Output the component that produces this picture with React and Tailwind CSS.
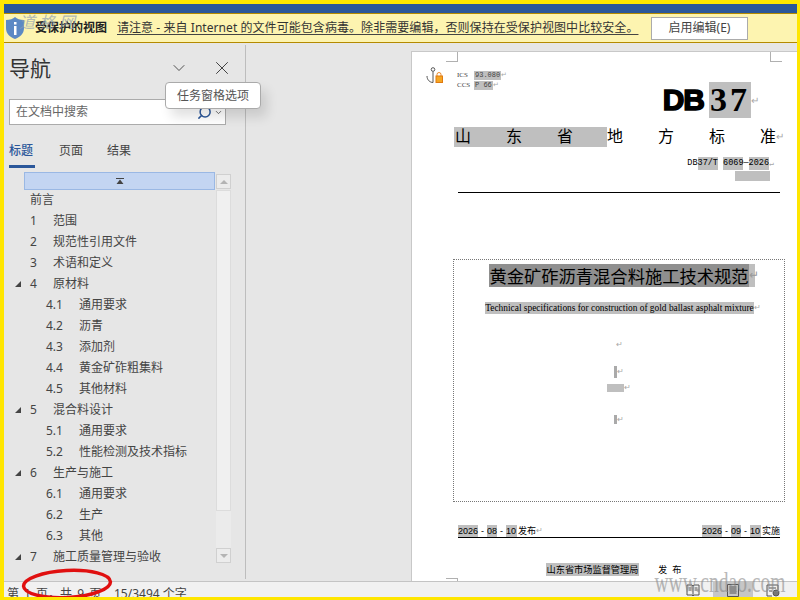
import React from "react";
import { ChevronDown, X, Search } from "lucide-react";

const CJK = "font-['Noto_Sans','Noto_Sans_CJK_SC',sans-serif]";

const TREE = [
  { text: "前言", plain: true },
  { num: "1", text: "范围" },
  { num: "2", text: "规范性引用文件" },
  { num: "3", text: "术语和定义" },
  { num: "4", text: "原材料", open: true },
  { num: "4.1", text: "通用要求", sub: true },
  { num: "4.2", text: "沥青", sub: true },
  { num: "4.3", text: "添加剂", sub: true },
  { num: "4.4", text: "黄金矿砟粗集料", sub: true },
  { num: "4.5", text: "其他材料", sub: true },
  { num: "5", text: "混合料设计", open: true },
  { num: "5.1", text: "通用要求", sub: true },
  { num: "5.2", text: "性能检测及技术指标", sub: true },
  { num: "6", text: "生产与施工", open: true },
  { num: "6.1", text: "通用要求", sub: true },
  { num: "6.2", text: "生产", sub: true },
  { num: "6.3", text: "其他", sub: true },
  { num: "7", text: "施工质量管理与验收", open: true },
];

function Ret({ className = "" }) {
  return <span className={`text-[#a8a8a8] ${className}`}>↵</span>;
}

function TreeRow({ row }) {
  if (row.plain) {
    return <div className="h-[21px] flex items-center pl-[26px]">{row.text}</div>;
  }
  return (
    <div className="h-[21px] flex items-center">
      <div className="w-[26px] shrink-0 pl-[10px]">
        {row.open && (
          <svg width="8" height="8" viewBox="0 0 8 8">
            <path d="M7 1v6H1z" fill="#444" />
          </svg>
        )}
      </div>
      {row.sub ? (
        <>
          <span className="w-[33px] shrink-0 pl-4 box-content">{row.num}</span>
          <span>{row.text}</span>
        </>
      ) : (
        <>
          <span className="w-[23px] shrink-0">{row.num}</span>
          <span>{row.text}</span>
        </>
      )}
    </div>
  );
}

function NavPane() {
  return (
    <div className="relative w-[241px] shrink-0 h-full">
      <div className="flex items-center h-[46px] pt-[4px] pl-[5px]">
        <span className="text-[21px] text-[#333] w-[160px] leading-none">导航</span>
        <ChevronDown size={20} strokeWidth={1} className="text-[#333]" />
        <X size={22} strokeWidth={1} className="text-[#333] ml-[22px]" />
      </div>
      <div className="ml-[5px] mt-[10px] w-[217px] h-[26px] bg-white border border-[#ababab] flex items-center pl-[6px] text-[12px] text-[#666]">
        <span className="flex-1">在文档中搜索</span>
        <Search size={15} strokeWidth={2.4} className="text-[#2b579a] -scale-x-100" />
        <ChevronDown size={9} strokeWidth={2} className="text-[#444] mx-[2px]" />
      </div>
      <div className="ml-[5px] mt-[17px] flex gap-[24px] text-[12px] text-[#444] h-[26px]">
        <span className="w-[26px] h-[26px] border-b-[3px] border-[#2b579a] text-[#2b579a] font-medium">标题</span>
        <span>页面</span>
        <span>结果</span>
      </div>
      <div className="flex mt-[4px]">
        <div className="w-[212px] overflow-hidden text-[12px] text-[#444]">
          <div className="ml-[20px] w-[191px] h-[18px] -mb-[1px] bg-[#c3d5f2] border border-[#9ab8e4] flex items-center justify-center">
            <svg width="10" height="8" viewBox="0 0 10 8">
              <path d="M1 1h8v1H1zM5 2.5 8.5 7h-7z" fill="#444" />
            </svg>
          </div>
          {TREE.map((row) => (
            <TreeRow key={row.num || row.text} row={row} />
          ))}
        </div>
        <div className="w-[15px] mt-[2px] h-[389px] flex flex-col">
          <div className="h-[15px] border border-[#d0d0d0] bg-[#ececec] flex items-center justify-center">
            <div className="w-0 h-0 border-x-[4px] border-x-transparent border-b-[4px] border-b-[#b4b4b4]" />
          </div>
          <div className="h-[321px] mt-[1px] bg-[#f0f0f0] border border-[#dcdcdc]" />
          <div className="flex-1 bg-[#ebebeb]" />
          <div className="h-[15px] border border-[#d0d0d0] bg-[#ececec] flex items-center justify-center">
            <div className="w-0 h-0 border-x-[4px] border-x-transparent border-t-[4px] border-t-[#b4b4b4]" />
          </div>
        </div>
      </div>
      <div className="absolute left-[161px] top-[39px] w-[96px] h-[27px] bg-white border border-[#aaa] rounded-[4px] flex items-center justify-center text-[12px] text-[#555] shadow-[6px_8px_12px_rgba(0,0,0,0.12)]">
        任务窗格选项
      </div>
    </div>
  );
}

function CropMark({ className }) {
  return <div className={`absolute w-[12px] h-[10px] border-[#b0b0b0] ${className}`} />;
}

function DateGroup({ month, label, tail }) {
  return (
    <div className="flex">
      <span className="bg-[#bfbfbf]">2026</span>
      <span className="px-[3px]">-</span>
      <span className="bg-[#bfbfbf]">{month}</span>
      <span className="px-[3px]">-</span>
      <span className="bg-[#bfbfbf] pr-px">10</span>
      <span className="ml-px">{label}</span>
      {tail && <Ret className="text-[8px]" />}
    </div>
  );
}

function Page() {
  return (
    <div className="relative ml-[165px] mt-[8px] flex-1 bg-white border-l border-t border-[#c8c8c8] overflow-hidden font-['Liberation_Serif','Noto_Sans_CJK_SC',serif] text-black">
      <CropMark className="left-[34px] top-0 border-r border-b" />
      <CropMark className="left-[358px] top-0 border-l border-b" />
      <CropMark className="left-[34px] top-[526px] border-r border-t" />
      <svg className="absolute left-[14px] top-[15px]" width="18" height="18" viewBox="0 0 18 18" fill="none">
        <circle cx="7" cy="2.5" r="1.8" stroke="#555" />
        <path d="M7 4.5v11M1 9c0 4 3 6.5 6 6.5" stroke="#555" />
        <path d="M11 9V7.5a2 2 0 0 1 4 0V9" stroke="#e98a2b" />
        <rect x="10" y="9" width="6.5" height="6.5" fill="#f5a623" stroke="#e07a10" />
      </svg>

      <div className="pl-[45px] pt-[19px] text-[7px] leading-[9px] text-[#444]">
        <div className="flex">
          <span className="w-[17px]">ICS</span>
          <span className="bg-[#bfbfbf] px-px font-['Liberation_Mono',monospace]">93.080</span>
          <Ret />
        </div>
        <div className="flex mt-[1px]">
          <span className="w-[17px]">CCS</span>
          <span className="bg-[#bfbfbf] px-px font-['Liberation_Mono',monospace]">P 66</span>
          <Ret />
        </div>
      </div>

      <div className="flex justify-end items-center h-[36px] pr-[38px] mt-[-8px]">
        <span className="text-[30px] font-black leading-none font-['Liberation_Sans',sans-serif] tracking-[-1px] [-webkit-text-stroke:1.5px_black]">DB</span>
        <span className="ml-[5px] w-[42px] h-[36px] bg-[#bfbfbf] text-[34px] font-bold leading-[36px] text-center tracking-[3px]">37</span>
        <Ret className="text-[10px]" />
      </div>

      <div className="flex ml-[42px] mt-[9px] h-[20px] text-[16px] leading-[20px]">
        <div className="flex bg-[#bfbfbf]">
          <span className="w-[51px] pl-px">山</span>
          <span className="w-[51px] pl-px">东</span>
          <span className="w-[51px] pl-px">省</span>
        </div>
        <span className="w-[51px]">地</span>
        <span className="w-[51px]">方</span>
        <span className="w-[51px]">标</span>
        <span className="w-[16px]">准</span>
        <Ret className="text-[10px]" />
      </div>

      <div className="flex justify-end pr-[24px] mt-[10px] h-[13px] text-[8.5px] leading-[13px] font-['Liberation_Mono',monospace] whitespace-pre">
        <span>DB</span>
        <span className="bg-[#bfbfbf]">37/T</span>
        <span> </span>
        <span className="bg-[#bfbfbf]">6069</span>
        <span className="text-[#111]">—</span>
        <span className="bg-[#bfbfbf]">2026</span>
        <Ret className="text-[8px] w-[4px]" />
      </div>
      <div className="flex justify-end pr-[27px] mt-px">
        <div className="w-[35px] h-[10px] bg-[#bfbfbf]" />
      </div>
      <div className="ml-[46px] w-[322px] h-px bg-black mt-[11px]" />

      <div className="ml-[41px] w-[332px] h-[243px] mt-[66px] border border-dotted border-[#777] flex flex-col items-center">
        <div className="mt-[4px] ml-[6px] h-[23px] flex items-center">
          <span className="bg-[#8f8f8f] text-[17.3px] leading-[23px] font-['Noto_Sans_CJK_SC',sans-serif]">黄金矿砟沥青混合料施工技术规范</span>
          <span className="bg-[#bfbfbf] w-[6px] h-[23px] text-[12px] leading-[23px] text-[#999]">↵</span>
        </div>
        <div className="mt-[15px] ml-[4px] flex items-center">
          <span className="bg-[#bfbfbf] text-[9.4px] leading-[12px] whitespace-nowrap">Technical specifications for construction of gold ballast asphalt mixture</span>
          <Ret className="text-[8px] w-[3px]" />
        </div>
        <Ret className="text-[8px] mt-[26px] leading-[10px]" />
        <div className="mt-[16px] flex items-center h-[12px]">
          <div className="w-[3px] h-[12px] bg-[#aaa]" />
          <Ret className="text-[8px]" />
        </div>
        <div className="mt-[6px] flex items-center h-[8px]">
          <div className="w-[17px] h-[8px] bg-[#bfbfbf]" />
          <Ret className="text-[8px]" />
        </div>
        <div className="mt-[23px] flex items-center h-[9px]">
          <div className="w-[3px] h-[9px] bg-[#aaa]" />
          <Ret className="text-[8px]" />
        </div>
      </div>

      <div className="ml-[46px] w-[322px] mt-[21px] h-[15px] pt-[2px] border-b border-black flex justify-between text-[9px] leading-[12px] font-['Liberation_Sans','Noto_Sans_CJK_SC',sans-serif]">
        <DateGroup month="08" label="发布" tail />
        <DateGroup month="09" label="实施" />
      </div>

      <div className="flex ml-[134px] mt-[25px] text-[9.2px] leading-[13px] font-['Noto_Sans_CJK_SC',sans-serif]">
        <span className="bg-[#bfbfbf] w-[93px] text-center whitespace-nowrap">山东省市场监督管理局</span>
        <span className="ml-[19px] tracking-[5px]">发布</span>
      </div>
    </div>
  );
}

export default function App() {
  return (
    <div className={`relative w-[800px] h-[600px] overflow-hidden border-t-[4px] border-l-[4px] border-r-[3px] border-b-[3px] border-[#ffe600] flex flex-col ${CJK}`}>
      <div className="h-[9px] shrink-0 bg-[#2b579a]" />
      <div className="h-[30px] shrink-0 bg-[#fdf4b0] border-y border-[#b48a00] flex items-center text-[12px] text-[#333]">
        <svg className="ml-px shrink-0" width="20" height="24" viewBox="0 0 20 24">
          <path d="M1 4c4 0 7-1 9-3 2 2 5 3 9 3v8c0 6-4 9-9 11-5-2-9-5-9-11z" fill="#5c89c4" />
          <rect x="9" y="6" width="2.5" height="2.5" fill="#fff" />
          <rect x="9" y="10" width="2.5" height="9" fill="#fff" />
        </svg>
        <span className="ml-[10px] font-bold text-[#222] w-[82px] whitespace-nowrap shrink-0">受保护的视图</span>
        <div className="w-[521px] shrink-0">
          <span className="underline whitespace-pre decoration-[#444] underline-offset-2 tracking-[0.06px]">{"请注意 - 来自 Internet 的文件可能包含病毒。除非需要编辑，否则保持在受保护视图中比较安全。"}</span>
        </div>
        <div className="ml-[13px] w-[97px] h-[23px] bg-white border border-[#ababab] flex items-center justify-center text-[#444] shrink-0">
          启用编辑(E)
        </div>
      </div>
      <div className="flex-1 min-h-0 flex bg-[#e6e6e6]">
        <NavPane />
        <div className="w-px bg-[#bdbdbd] mt-[2px] mb-[2px] shrink-0" />
        <Page />
      </div>
      <div className="h-[16px] shrink-0 bg-[#f1f1f1] border-t border-[#c4c4c4] flex text-[12px] leading-[16px] text-[#444] whitespace-pre overflow-hidden">
        <span className="ml-[3px] mt-[4px] w-[107px] [word-spacing:2px]">第 1 页，共 9 页</span>
        <span className="mt-[4px]">15/3494 个字</span>
        <div className="ml-auto flex items-end h-full mr-[17px]">
          <svg width="14" height="14" viewBox="0 0 14 14" fill="none" stroke="#555" className="mr-[13px]">
            <path d="M1 2h5l1 1 1-1h5v10H8l-1 1-1-1H1zM7 3v9M2.5 5h3M2.5 7h3M8.5 5h3M8.5 7h3" />
          </svg>
          <div className="w-[40px] h-[15px] bg-[#c6c6c6] flex justify-center items-end">
            <svg width="14" height="14" viewBox="0 0 14 14" fill="none" stroke="#555">
              <path d="M1.5 1.5h11v12h-11zM3.5 4h7M3.5 6h7M3.5 8h7M3.5 10h7" />
            </svg>
          </div>
          <svg width="14" height="14" viewBox="0 0 14 14" fill="none" stroke="#555" className="ml-[13px]">
            <path d="M1 2h11v5M1 2v11h5M3 5h7M3 8h3" />
            <circle cx="10" cy="10" r="3" fill="#777" />
          </svg>
        </div>
      </div>

      {/* pasted watermark and red marker on top of the screenshot */}
      <div className="absolute left-[15px] top-[5px] text-[16px] tracking-[4px] text-[#8f9fb5] opacity-70 font-['Noto_Sans_CJK_SC',sans-serif] italic">道格网</div>
      <div className="absolute right-[12px] bottom-[0px] text-[30px] leading-none text-[#8a8a8a] opacity-60 font-['Liberation_Serif',serif] origin-right scale-x-[65%]">www.cndao.com</div>
      <svg className="absolute left-[15px] top-[561px]" width="100" height="36" viewBox="0 0 100 36" fill="none">
        <ellipse cx="48" cy="19" rx="43.5" ry="13.5" stroke="#e01010" strokeWidth="3.5" transform="rotate(-3 48 19)" />
      </svg>
    </div>
  );
}
